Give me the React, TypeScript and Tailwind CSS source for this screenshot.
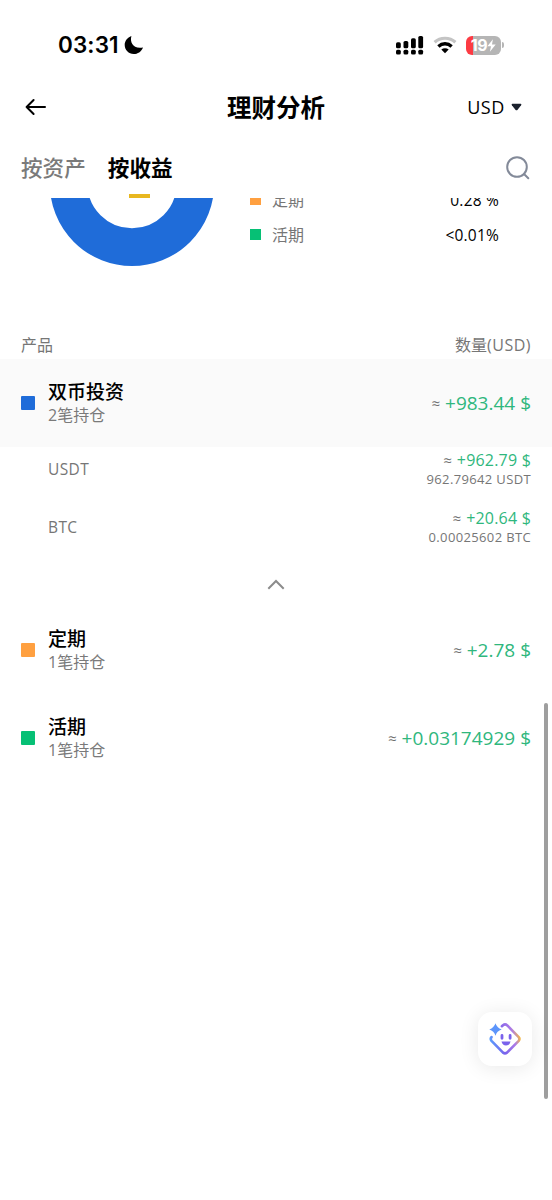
import type { ReactNode } from "react";

const SANS = "font-['Open_Sans','Noto_Sans_CJK_SC',sans-serif]";

const legend = [
    { name: "定期", value: "0.28 %", color: "bg-[#ffa040]" },
    { name: "活期", value: "<0.01%", color: "bg-[#06c075]" },
];

const coins = [
    { coin: "USDT", usd: "+962.79 $", amount: "962.79642 USDT" },
    { coin: "BTC", usd: "+20.64 $", amount: "0.00025602 BTC" },
];

function StatusBar() {
    return (
        <div className="flex h-20 items-center justify-between pt-[10px] pr-[48px] pl-[58px]">
            <div className="flex items-center gap-[5px]">
                <span className="font-['Inter',sans-serif] text-[22.5px] leading-[26px] font-semibold tracking-[0.1px]">03:31</span>
                <svg width="20" height="20" viewBox="0 0 20 20">
                    <path d="M7.4 1C5.6 7.8 9.4 14.2 19 12.4C17.4 16.6 13.6 19 9.7 19C4.6 19 .7 15.1 .7 10.1C.7 6.1 3.4 2.5 7.4 1Z" />
                </svg>
            </div>
            <div className="flex items-center">
                <svg width="28" height="20" viewBox="0 0 28 20">
                    <rect x="0" y="7.3" width="4.8" height="6" rx="1.6" />
                    <rect x="7.5" y="6" width="4.8" height="7.3" rx="1.6" />
                    <rect x="15" y="3.3" width="4.8" height="10" rx="1.6" />
                    <rect x="22.3" y="1" width="4.8" height="12.3" rx="1.6" />
                    <rect x="0" y="14.7" width="4.8" height="4.8" rx="1.6" />
                    <rect x="7.5" y="14.7" width="4.8" height="4.8" rx="1.6" />
                    <rect x="15" y="14.7" width="4.8" height="4.8" rx="1.6" />
                    <rect x="22.3" y="14.7" width="4.8" height="4.8" rx="1.6" />
                </svg>
                <svg className="ml-[9px]" width="24" height="18" viewBox="0 0 24 18" fill="none">
                    <path d="M1.6 6.2C7.4 .9 16.6 .9 22.4 6.2" stroke="#c4c4c4" strokeWidth="3.2" />
                    <path d="M5.4 10.4C9.2 6.9 14.8 6.9 18.6 10.4" stroke="#000" strokeWidth="3.4" />
                    <path d="M12 17.2L8.3 13.6C10.4 11.9 13.6 11.9 15.7 13.6Z" fill="#000" />
                </svg>
                <div className="ml-[9px] flex h-[19px] w-[35px] items-center justify-center rounded-[6px] bg-[linear-gradient(to_right,#fc3b43_20%,#b5b5b5_20%)]">
                    <span className="font-['Inter',sans-serif] text-[16px] leading-[19px] font-bold tracking-[-0.4px] text-white">19</span>
                    <svg width="9" height="13" viewBox="0 0 9 13" fill="#fff">
                        <path d="M5.9 .3L.4 7.3H4L2.9 12.7L8.7 5.5H5Z" />
                    </svg>
                </div>
                <div className="ml-px h-[6px] w-[2px] rounded-r-full bg-[#b5b5b5]" />
            </div>
        </div>
    );
}

function Header() {
    return (
        <div className="grid h-[54px] grid-cols-3 items-center pr-[30px] pl-[25px]">
            <svg width="22" height="18" viewBox="0 0 22 18" fill="none" stroke="#000" strokeWidth="2" strokeLinecap="round" strokeLinejoin="round">
                <path d="M20 9H1.6M8.6 2L1.6 9L8.6 16" />
            </svg>
            <h1 className="pt-0.5 pl-[5px] text-center text-[24.5px] leading-[30px] font-bold whitespace-nowrap">理财分析</h1>
            <div className="flex items-center justify-end gap-[6px]">
                <span className="text-[18px] leading-6 font-medium tracking-[0.6px]">USD</span>
                <svg width="11" height="8" viewBox="0 0 11 8" fill="#1c222e">
                    <path d="M1.3 .8H9.7Q11 1 10.1 2.3L6.6 6.7Q5.5 7.8 4.4 6.7L.9 2.3Q0 1 1.3 .8Z" />
                </svg>
            </div>
        </div>
    );
}

function Tabs() {
    return (
        <div className="relative flex h-16 items-center justify-between pt-1 pr-[22px] pl-[21px]">
            <div className="flex gap-[22px] text-[21.6px] leading-8">
                <span className="font-medium text-[#7a7a7a]">按资产</span>
                <span className="font-bold">按收益</span>
            </div>
            <svg width="24" height="24" viewBox="0 0 24 24" fill="none" stroke="#838a99" strokeWidth="2" strokeLinecap="round">
                <circle cx="11" cy="11" r="9.8" />
                <path d="M18 18L22.3 22.3" />
            </svg>
            <div className="absolute bottom-0 left-[129px] h-1 w-[21px] bg-[#e8b71f]" />
        </div>
    );
}

function Chart() {
    return (
        <div className="flex h-[132px] items-start overflow-hidden pr-[53px] pl-[49px]">
            <svg width="166" height="70" viewBox="0 14.2 166 70" fill="none">
                <circle cx="83" cy="0" r="63.35" stroke="#1f6cd9" strokeWidth="37.7" />
            </svg>
            {/* first row is scrolled half under the tabs */}
            <div className="-mt-4 ml-[35px] flex-1">
                {legend.map((l) => (
                    <div key={l.name} className="flex h-[35px] items-center">
                        <div className={`size-[11px] ${l.color}`} />
                        <span className="ml-[11px] text-[16px] leading-6 text-[#767676]">{l.name}</span>
                        <span className="ml-auto text-[15.5px] leading-6 font-medium tracking-[0.2px]">{l.value}</span>
                    </div>
                ))}
            </div>
        </div>
    );
}

type ProductProps = { name: string; count: string; value: string; color: string; open?: boolean };

function Product({ name, count, value, color, open }: ProductProps) {
    return (
        <div className={`flex h-[88px] items-center px-[21px] ${open ? "bg-[#fafafa]" : ""}`}>
            <div className={`size-[14px] rounded-[1px] ${color}`} />
            <div className="ml-[13px] pt-px">
                <div className="text-[19px] leading-6 font-medium">{name}</div>
                <div className="text-[16px] leading-[23px] text-[#7a7a7a]">{count}</div>
            </div>
            <Value className="ml-auto text-[19px]">{value}</Value>
        </div>
    );
}

function Value({ children, className }: { children: ReactNode; className: string }) {
    return (
        <div className={`flex items-center gap-[5px] leading-5 text-[#2fb77d] ${className}`}>
            <span className="text-[15px] tracking-normal text-[#707070]">≈</span>
            <span>{children}</span>
        </div>
    );
}

export default function App() {
    return (
        <div className={`relative h-[1200px] w-[552px] overflow-hidden bg-white text-black ${SANS}`}>
            <StatusBar />
            <Header />
            <Tabs />
            <Chart />

            <div className="flex h-[29px] items-center justify-between px-[21px] text-[16px] leading-6 text-[#767676]">
                <span>产品</span>
                <span>数量<span className="tracking-[0.5px]">(USD)</span></span>
            </div>

            <Product name="双币投资" count="2笔持仓" value="+983.44 $" color="bg-[#1f6cd9]" open />
            <div className="flex h-[159px] flex-col pt-[3px] pr-[21px] pl-12">
                {coins.map((c) => (
                    <div key={c.coin} className="flex h-[57.5px] items-start justify-between">
                        <span className="pt-[9px] text-[15.5px] leading-5 tracking-[0.4px] text-[#767676]">{c.coin}</span>
                        <div className="flex flex-col items-end">
                            <Value className="text-[16px] tracking-[0.2px]">{c.usd}</Value>
                            <div className="-mt-px text-[13px] leading-5 tracking-[0.36px] text-[#767676]">{c.amount}</div>
                        </div>
                    </div>
                ))}
                {/* collapse */}
                <svg className="mt-[14px] ml-[219px]" width="18" height="11" viewBox="0 0 18 11" fill="none" stroke="#8c8c8c" strokeWidth="2">
                    <path d="M1.3 9.8L9 2L16.7 9.8" />
                </svg>
            </div>
            <Product name="定期" count="1笔持仓" value="+2.78 $" color="bg-[#ffa040]" />
            <Product name="活期" count="1笔持仓" value="+0.03174929 $" color="bg-[#06c075]" />

            {/* scrollbar */}
            <div className="absolute top-[703px] right-[4px] h-[396px] w-1 rounded-full bg-[#9e9e9e]" />

            {/* assistant button */}
            <button className="absolute top-[1012px] left-[478px] flex size-[54px] items-center justify-center rounded-[14px] bg-white shadow-[0_2px_20px_rgba(0,0,0,0.09)]">
                <svg width="32" height="32" viewBox="0 0 32 32" fill="none" strokeLinecap="round" strokeLinejoin="round">
                    <defs>
                        <linearGradient id="face" x1="1" y1="22" x2="31" y2="14" gradientUnits="userSpaceOnUse">
                            <stop offset="0" stopColor="#55a4ff" />
                            <stop offset=".4" stopColor="#7a62ec" />
                            <stop offset=".8" stopColor="#ad7be6" />
                            <stop offset="1" stopColor="#f2b748" />
                        </linearGradient>
                    </defs>
                    <path d="M12.9 3.2L14 2.2Q16.2 .6 18.3 2.4L29.7 14.1Q31.2 16 29.7 17.9L18 29.6Q16 31.1 14 29.6L2.5 17.9Q1 16 2.5 14.1" stroke="url(#face)" strokeWidth="2.6" />
                    <path d="M6.5 .3Q7.8 4.9 12.7 6.5Q7.8 8 6.5 12.7Q5 8 .3 6.5Q5 4.9 6.5 .3Z" fill="#5c95fb" />
                    <path d="M13 12.5V15.3M21.1 12.5V15.3" stroke="#7a62ec" strokeWidth="2.8" />
                    <path d="M12.5 18.6H21.6Q20.6 22.6 17 22.6Q13.5 22.6 12.5 18.6Z" fill="#7a62ec" />
                </svg>
            </button>
        </div>
    );
}
